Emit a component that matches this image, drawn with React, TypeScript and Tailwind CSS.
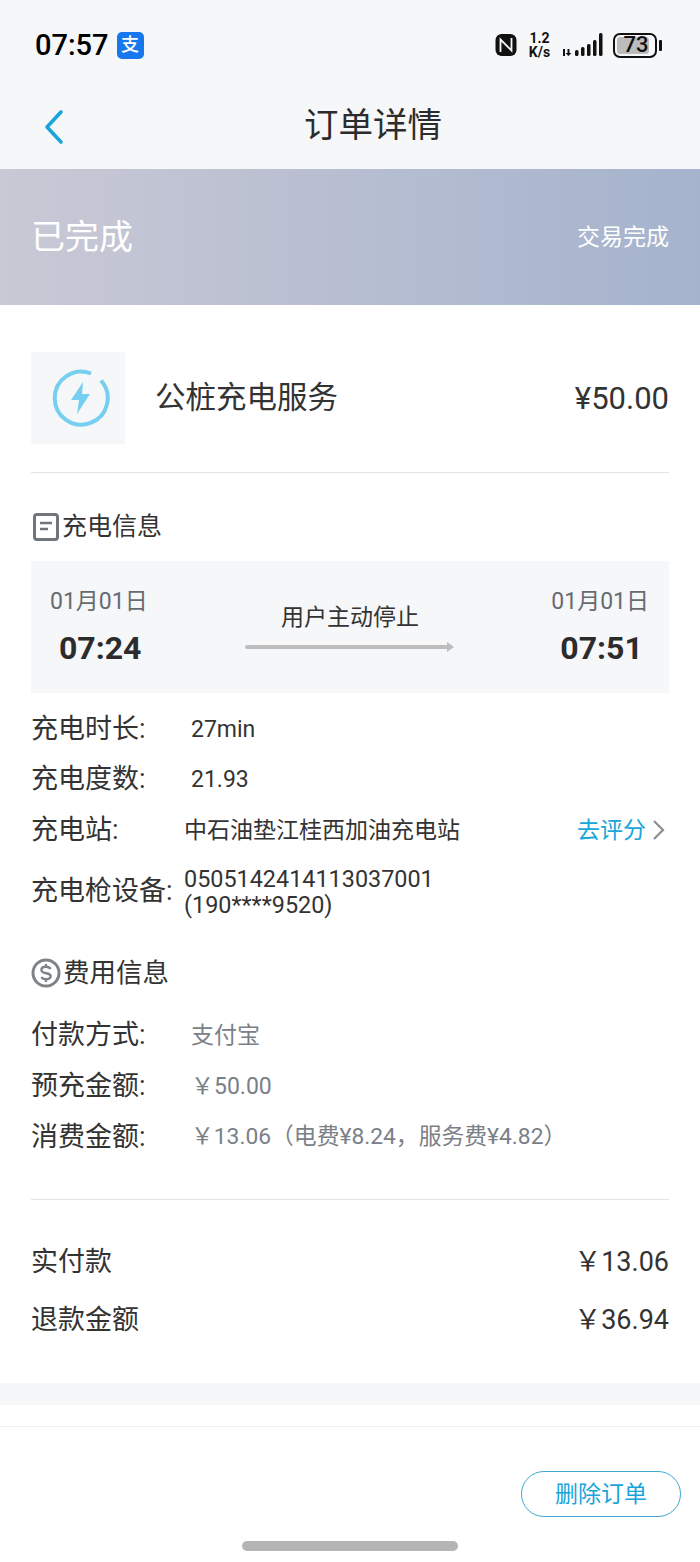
const font = "font-['Roboto','Noto_Sans_CJK_SC',sans-serif]";

function StatusBar() {
  return (
    <div className="flex h-[90px] items-center justify-between pl-[35px] pr-[43px]">
      <div className="flex items-center gap-[8px]">
        <span className="text-[29px] font-medium leading-none text-black">07:57</span>
        <span className="flex h-[27px] w-[27px] items-center justify-center rounded-[5px] bg-[#1677ee] text-[18px] font-medium leading-none text-white">
          支
        </span>
      </div>
      <div className="flex items-center">
        <svg width="22" height="24" viewBox="0 0 22 24" className="mr-[10px]">
          <rect x="0.5" y="1" width="21" height="22" rx="6" fill="#111" />
          <path d="M5.5 19V6.5L16.5 17.5V5" fill="none" stroke="#f6f7f9" strokeWidth="1.8" />
        </svg>
        <div className="mr-[10px] flex w-[25px] flex-col items-center text-[14px] font-bold leading-[14px] text-[#111]">
          <span>1.2</span>
          <span>K/s</span>
        </div>
        <svg width="42" height="24" viewBox="0 0 42 24" className="mr-[9px]" fill="#111">
          <rect x="1" y="16" width="2" height="7" />
          <path d="M5.5 16h2v4h2l-3 3-3-3h2z" />
          <rect x="13" y="17" width="3.5" height="6" rx="1.5" />
          <rect x="19" y="14" width="3.5" height="9" rx="1.5" />
          <rect x="25" y="11" width="3.5" height="12" rx="1.5" />
          <rect x="31" y="7" width="3.5" height="16" rx="1.5" />
          <rect x="37" y="0" width="3.5" height="23" rx="1.5" />
        </svg>
        <div className="relative h-[25px] w-[44px] rounded-[7px] border-2 border-[#111] p-[2px]">
          <div className="flex h-full w-[32px] items-center justify-center rounded-[3px] bg-[#bcbcbc] pl-[6px] text-[22px] font-medium leading-none text-[#111]">
            73
          </div>
          <span className="absolute right-[-7px] top-[5px] h-[11px] w-[3px] rounded-[1px] bg-[#111]" />
        </div>
      </div>
    </div>
  );
}

function Row({ label, value, className, tall }: { label: string; value: string; className: string; tall?: boolean }) {
  return (
    <div className={tall ? "flex h-[51px] items-center" : "flex h-[50.5px] items-center"}>
      <span className="w-[160px] text-[27px] leading-none text-[#333]">{label}</span>
      <span className={className}>{value}</span>
    </div>
  );
}

export default function App() {
  return (
    <div className={`${font} flex h-[1562px] w-[700px] flex-col overflow-hidden bg-white`}>
      <div className="bg-[#f6f7f9]">
        <StatusBar />
        <div className="relative flex h-[79px] items-center justify-center pb-[8px] pl-[46px]">
          <svg width="24" height="36" viewBox="0 0 24 36" className="absolute left-[42px] top-[19px]">
            <path d="M19 3L5 18l14 15" fill="none" stroke="#18a5da" strokeWidth="3.6" strokeLinecap="round" strokeLinejoin="round" />
          </svg>
          <h1 className="text-[34.5px] font-normal leading-none text-[#2c2c2c]">订单详情</h1>
        </div>
      </div>

      <div className="flex h-[136px] items-center justify-between bg-gradient-to-r from-[#c9c9d5] to-[#a5b3cd] pl-[31px] pr-[31px]">
        <span className="text-[34px] leading-none text-white">已完成</span>
        <span className="text-[23px] leading-none text-white">交易完成</span>
      </div>

      <div className="px-[31px]">
        <div className="flex h-[168px] items-center justify-between border-b border-[#e2e3e5] pt-[19px]">
          <div className="flex items-center">
            <div className="flex h-[92px] w-[94px] items-center justify-center bg-[#f6f7f9] pl-[5px]">
              <svg width="58" height="58" viewBox="0 0 58 58">
                <path d="M39 4.5A26.5 26.5 0 1 0 49 11.5" fill="none" stroke="#76cff0" strokeWidth="4" />
                <path d="M31 13L19 31h8l-2 14 13-20h-8z" fill="#76cff0" />
              </svg>
            </div>
            <span className="ml-[30px] text-[30.5px] leading-none text-[#333]">公桩充电服务</span>
          </div>
          <span className="text-[31px] leading-none text-[#333]">¥50.00</span>
        </div>

        <div className="flex h-[88px] items-center pt-[19px]">
          <svg width="28" height="30" viewBox="0 0 28 30" className="ml-[1px] mr-[2px]">
            <rect x="2.5" y="2.5" width="23" height="25" rx="2.5" fill="none" stroke="#6f767c" strokeWidth="3" />
            <path d="M8 11h12M8 17h8" stroke="#6f767c" strokeWidth="2.4" />
          </svg>
          <span className="text-[25px] leading-none text-[#333]">充电信息</span>
        </div>

        <div className="flex h-[132px] items-center justify-between bg-[#f6f7f9] pl-[19px] pr-[20px]">
          <div className="flex flex-col items-start gap-[15px] pb-[3px]">
            <span className="text-[23px] leading-[30px] text-[#666b70]">01月01日</span>
            <span className="ml-[9px] text-[32px] font-bold leading-[32px] text-[#2c2c2c]">07:24</span>
          </div>
          <div className="flex flex-col items-center gap-[9px] pl-[1px]">
            <span className="text-[23px] leading-[30px] text-[#333]">用户主动停止</span>
            <svg width="210" height="10" viewBox="0 0 210 10">
              <path d="M2 5h202" stroke="#bdbdbd" strokeWidth="4" strokeLinecap="round" />
              <path d="M202 0l7 5-7 5z" fill="#bdbdbd" />
            </svg>
          </div>
          <div className="flex flex-col items-start gap-[15px] pb-[3px]">
            <span className="text-[23px] leading-[30px] text-[#666b70]">01月01日</span>
            <span className="ml-[9px] text-[32px] font-bold leading-[32px] text-[#2c2c2c]">07:51</span>
          </div>
        </div>

        <div className="mt-[11px]">
          <Row label="充电时长:" value="27min" className="text-[23px] leading-none text-[#333]" />
          <Row label="充电度数:" value="21.93" className="text-[23px] leading-none text-[#333]" />
          <div className="flex h-[50.5px] items-center">
            <span className="w-[153px] text-[27px] leading-none text-[#333]">充电站:</span>
            <span className="flex-1 text-[23px] leading-none text-[#333]">中石油垫江桂西加油充电站</span>
            <span className="text-[23px] leading-none text-[#18a5da]">去评分</span>
            <svg width="14" height="22" viewBox="0 0 14 22" className="ml-[6px] mr-[3px]">
              <path d="M2 2l9 9-9 9" fill="none" stroke="#8a8f94" strokeWidth="2.2" />
            </svg>
          </div>
          <div className="flex h-[72px] items-center">
            <span className="w-[153px] text-[27px] leading-none text-[#333]">充电枪设备:</span>
            <span className="text-[23.4px] leading-[26px] text-[#333]">
              0505142414113037001
              <br />
              (190****9520)
            </span>
          </div>
        </div>

        <div className="mt-[15.5px] flex h-[60px] items-center">
          <svg width="30" height="30" viewBox="0 0 30 30" className="mr-[2px]">
            <circle cx="15" cy="15" r="13" fill="none" stroke="#7e8387" strokeWidth="3" />
            <path d="M19.5 11c-.8-1.5-2.5-2.2-4.5-2.2-2.8 0-4.6 1.4-4.6 3.2 0 4.6 9.2 1.9 9.2 6 0 1.9-1.8 3.2-4.6 3.2-2 0-3.7-.7-4.5-2.2M15 6v3M15 21v3" fill="none" stroke="#7e8387" strokeWidth="2.4" />
          </svg>
          <span className="text-[26.5px] leading-none text-[#333]">费用信息</span>
        </div>

        <div className="mt-[7px] border-b border-[#e2e3e5] pb-[36px]">
          <Row tall label="付款方式:" value="支付宝" className="text-[23px] leading-none text-[#7a8087]" />
          <Row tall label="预充金额:" value="￥50.00" className="text-[23px] leading-none text-[#7a8087]" />
          <Row tall label="消费金额:" value="￥13.06（电费¥8.24，服务费¥4.82）" className="text-[22.8px] leading-none text-[#7a8087]" />
        </div>

        <div className="mt-[33px] flex h-[58px] items-center justify-between text-[27px] leading-none text-[#333]">
          <span>实付款</span>
          <span>￥13.06</span>
        </div>
        <div className="flex h-[58px] items-center justify-between text-[27px] leading-none text-[#333]">
          <span>退款金额</span>
          <span>￥36.94</span>
        </div>
      </div>

      <div className="mt-[34px] h-[22px] bg-[#f6f7f9]" />
      <div className="mt-[21px] flex flex-1 flex-col border-t border-[#eeeff1]">
        <div className="flex justify-end pr-[19px] pt-[44px]">
          <button className="flex h-[46px] w-[160px] items-center justify-center rounded-full border border-[#3ea9cf] text-[23px] leading-none text-[#18a5da]">
            删除订单
          </button>
        </div>
        <div className="mx-auto mt-[24px] h-[10px] w-[216px] rounded-full bg-[#b5b5b5]" />
      </div>
    </div>
  );
}
